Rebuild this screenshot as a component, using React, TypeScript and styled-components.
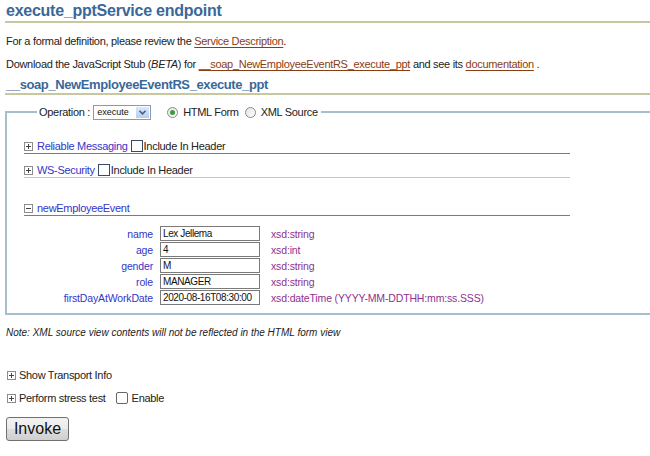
import React from "react";
import styled, { createGlobalStyle } from "styled-components";

const Global = createGlobalStyle`
  html, body { margin: 0; padding: 0; background: #fff; overflow: hidden; }
  body { font-family: "Liberation Sans", Arial, sans-serif; color: #222; }
`;

const Page = styled.div`
  padding: 0 0 0 5px;
  width: 645px;
`;

const Title = styled.h1`
  margin: 0;
  font-size: 16px;
  letter-spacing: -0.25px;
  line-height: 21px;
  font-weight: bold;
  color: #3a6898;
  padding-left: 1px;
  border-bottom: 2px solid #c8c8a0;
`;

const SubTitle = styled.h2`
  margin: 6px 0 0;
  font-size: 13px;
  letter-spacing: -0.4px;
  line-height: 16px;
  font-weight: bold;
  color: #3a6898;
  padding-left: 1px;
  border-bottom: 2px solid #c8c8a0;
`;

const Para = styled.p<{ $top: number }>`
  margin: ${(p) => p.$top}px 0 0 1px;
  font-size: 11px;
  letter-spacing: -0.3px;
  line-height: 14px;
  color: #222;
`;

const Link = styled.a`
  color: #8a3c14;
  text-decoration: underline;
  text-underline-offset: 2px;
`;

const Fieldset = styled.fieldset`
  margin: 9px 0 0;
  padding: 0 0 8px 17px;
  border: 2px solid #a7bfcd;
  border-right: none;
  min-width: 0;
`;

const Legend = styled.legend`
  margin-left: 13px;
  padding: 0 3px 0 2px;
  display: flex;
  align-items: center;
  height: 16px;
  font-size: 11px;
  letter-spacing: -0.3px;
  color: #222;
`;

const LegendLabel = styled.span`
  margin-right: 3px;
`;

const Select = styled.span`
  display: inline-flex;
  align-items: stretch;
  width: 58px;
  height: 15px;
  box-sizing: border-box;
  border: 1px solid #7f9db9;
  background: #fff;
  margin-right: 16px;
`;

const SelectText = styled.span`
  flex: 1;
  font-size: 9px;
  letter-spacing: 0;
  line-height: 13px;
  padding-left: 3px;
  color: #111;
`;

const SelectButton = styled.span`
  width: 15px;
  background: linear-gradient(#dce8fb, #b7cdf3);
  border: 1px solid #fff;
  box-sizing: border-box;
  display: flex;
  align-items: center;
  justify-content: center;
`;

const Radio = styled.span<{ $on?: boolean }>`
  position: relative;
  width: 11px;
  height: 11px;
  box-sizing: border-box;
  border-radius: 50%;
  border: 1px solid #7d8c9a;
  background: linear-gradient(135deg, #e4e4e0, #fff);
  margin-right: 5px;
  &::after {
    content: "";
    display: ${(p) => (p.$on ? "block" : "none")};
    position: absolute;
    left: 2px;
    top: 2px;
    width: 5px;
    height: 5px;
    border-radius: 50%;
    background: #3f9a3f;
  }
`;

const RadioLabel = styled.span`
  margin-right: 6px;
`;

const Section = styled.div<{ $top: number; $line: string }>`
  margin-top: ${(p) => p.$top}px;
  width: 546px;
  height: 14px;
  display: flex;
  align-items: center;
  font-size: 11px;
  letter-spacing: -0.3px;
  border-bottom: 1px solid ${(p) => p.$line};
`;

const Plus = ({ minus }: { minus?: boolean }) => (
  <svg width="9" height="9" viewBox="0 0 9 9" style={{ flex: "none" }}>
    <rect x="0.5" y="0.5" width="8" height="8" fill="#fff" stroke="#8c8c8c" />
    <path d="M2 4.5h5" stroke="#444" />
    {!minus && <path d="M4.5 2v5" stroke="#444" />}
  </svg>
);

const SectionLink = styled.span`
  color: #3535c8;
  margin-left: 4px;
  margin-right: 3px;
`;

const Check = styled.span<{ $round?: boolean }>`
  width: 12px;
  height: 12px;
  box-sizing: border-box;
  border: 1px solid ${(p) => (p.$round ? "#666" : "#3a4a66")};
  border-radius: ${(p) => (p.$round ? "2px" : "0")};
  background: #fff;
  margin-right: 1px;
  flex: none;
`;

const Table = styled.div`
  margin-top: 10px;
  display: grid;
  grid-template-columns: 129px 100px auto;
  column-gap: 7px;
  row-gap: 1px;
  align-items: center;
  font-size: 10.5px;
  letter-spacing: -0.15px;
`;

const FieldLabel = styled.span`
  color: #3535c8;
  text-align: right;
`;

const Input = styled.span`
  height: 15px;
  box-sizing: border-box;
  border: 1px solid #7a7a7a;
  font-size: 10px;
  letter-spacing: -0.4px;
  line-height: 13px;
  padding-left: 2px;
  color: #111;
  white-space: nowrap;
  overflow: hidden;
`;

const TypeText = styled.span`
  color: #903090;
  margin-left: 4px;
`;

const Note = styled.p`
  margin: 11px 0 0 1px;
  font-size: 10px;
  line-height: 14px;
  font-style: italic;
  color: #222;
`;

const Toggle = styled.div<{ $top: number }>`
  margin-top: ${(p) => p.$top}px;
  margin-left: 2px;
  height: 14px;
  display: flex;
  align-items: center;
  font-size: 11px;
  letter-spacing: -0.3px;
  color: #222;
`;

const ToggleText = styled.span`
  margin-left: 3px;
`;

const Button = styled.button`
  margin-top: 12px;
  margin-left: 1px;
  height: 24px;
  width: 63px;
  font-family: "Liberation Sans", Arial, sans-serif;
  font-size: 16px;
  color: #111;
  border: 1px solid #707070;
  border-radius: 3px;
  background: linear-gradient(#f2f2f2, #ebebeb 50%, #dddddd 51%, #cfcfcf);
  padding: 0;
`;

const rows = [
  ["name", "Lex Jellema", "xsd:string"],
  ["age", "4", "xsd:int"],
  ["gender", "M", "xsd:string"],
  ["role", "MANAGER", "xsd:string"],
  ["firstDayAtWorkDate", "2020-08-16T08:30:00", "xsd:dateTime (YYYY-MM-DDTHH:mm:ss.SSS)"],
];

export default function App() {
  return (
    <Page>
      <Global />
      <Title>execute_pptService endpoint</Title>
      <Para $top={11}>
        For a formal definition, please review the <Link>Service Description</Link>.
      </Para>
      <Para $top={9}>
        Download the JavaScript Stub (<i>BETA</i>) for <Link>__soap_NewEmployeeEventRS_execute_ppt</Link> and see its{" "}
        <Link>documentation</Link> .
      </Para>
      <SubTitle>__soap_NewEmployeeEventRS_execute_ppt</SubTitle>
      <Fieldset>
        <Legend>
          <LegendLabel>Operation :</LegendLabel>
          <Select>
            <SelectText>execute</SelectText>
            <SelectButton>
              <svg width="7" height="5" viewBox="0 0 7 5">
                <path d="M0.5 0.8L3.5 3.8L6.5 0.8" fill="none" stroke="#4d6185" strokeWidth="1.6" />
              </svg>
            </SelectButton>
          </Select>
          <Radio $on />
          <RadioLabel>HTML Form</RadioLabel>
          <Radio />
          <span>XML Source</span>
        </Legend>
        <Section $top={19} $line="#7c7c7c">
          <Plus />
          <SectionLink>Reliable Messaging</SectionLink>
          <Check />
          <span>Include In Header</span>
        </Section>
        <Section $top={9} $line="#c4c4c4">
          <Plus />
          <SectionLink>WS-Security</SectionLink>
          <Check />
          <span>Include In Header</span>
        </Section>
        <Section $top={23} $line="#7c7c7c">
          <Plus minus />
          <SectionLink>newEmployeeEvent</SectionLink>
        </Section>
        <Table>
          {rows.map(([l, v, t]) => (
            <React.Fragment key={l}>
              <FieldLabel>{l}</FieldLabel>
              <Input>{v}</Input>
              <TypeText>{t}</TypeText>
            </React.Fragment>
          ))}
        </Table>
      </Fieldset>
      <Note>Note: XML source view contents will not be reflected in the HTML form view</Note>
      <Toggle $top={28}>
        <Plus />
        <ToggleText>Show Transport Info</ToggleText>
      </Toggle>
      <Toggle $top={9}>
        <Plus />
        <ToggleText>Perform stress test</ToggleText>
        <Check $round style={{ marginLeft: 10, marginRight: 4 }} />
        <span>Enable</span>
      </Toggle>
      <Button>Invoke</Button>
    </Page>
  );
}
